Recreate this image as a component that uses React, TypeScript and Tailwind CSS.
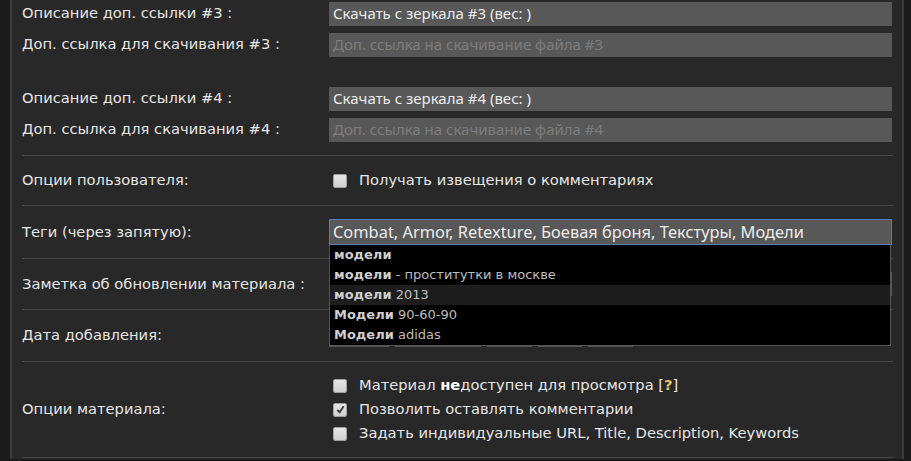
import React from 'react';

const labelFont = "font-['DejaVu_Sans','Liberation_Sans',sans-serif]";
const inputFont = "font-['Noto_Sans','Open_Sans',sans-serif]";

function Label({ children }: { children: React.ReactNode }) {
  return (
    <div className={`w-[307px] shrink-0 text-[14.7px] text-[#e6e6e6] ${labelFont}`}>{children}</div>
  );
}

function TextInput({ value, placeholder }: { value?: string; placeholder?: string }) {
  return (
    <div
      className={`flex h-[24px] w-[563px] items-center bg-[#585858] px-[4px] text-[15px] ${inputFont} ${
        value ? 'text-[#ececec]' : 'text-[#7c7c7c]'
      }`}
    >
      {value ?? placeholder}
    </div>
  );
}

function Checkbox({ checked }: { checked?: boolean }) {
  return (
    <div className="flex h-[14px] w-[14px] shrink-0 items-center justify-center rounded-[2px] border border-[#a0a0a0] bg-gradient-to-b from-[#e6e6e6] to-[#d0d0d0]">
      {checked && (
        <svg viewBox="0 0 12 12" className="h-[11px] w-[11px]">
          <path d="M2.5 6.5 L5 9 L9.5 2.5" fill="none" stroke="#3a3a3a" strokeWidth="2" />
        </svg>
      )}
    </div>
  );
}

function CheckRow({ checked, children }: { checked?: boolean; children: React.ReactNode }) {
  return (
    <div className={`flex h-[24px] items-center gap-[12px] pl-[4px] text-[14.7px] text-[#e6e6e6] ${labelFont}`}>
      <Checkbox checked={checked} />
      <span>{children}</span>
    </div>
  );
}

const suggestions: { b: string; rest: string; active?: boolean }[] = [
  { b: 'модели', rest: '' },
  { b: 'модели', rest: ' - проститутки в москве' },
  { b: 'модели', rest: ' 2013', active: true },
  { b: 'Модели', rest: ' 90-60-90' },
  { b: 'Модели', rest: ' adidas' },
];

export default function App() {
  return (
    <div className="h-[461px] overflow-hidden bg-[#1b1b1b] pl-[10px] pr-[7px]">
      <div className="h-full border-x-2 border-[#3b3b3b] bg-[#282828] pl-[10px] pr-[9px]">
        {/* mirrors */}
        <div className="-mt-[2px] pb-[10px]">
          <div className="flex h-[31px] items-center">
            <Label>Описание доп. ссылки #3 :</Label>
            <TextInput value="Скачать с зеркала #3 (вес: )" />
          </div>
          <div className="flex h-[31px] items-center">
            <Label>Доп. ссылка для скачивания #3 :</Label>
            <TextInput placeholder="Доп. ссылка на скачивание файла #3" />
          </div>
          <div className="h-[23px]" />
          <div className="flex h-[31px] items-center">
            <Label>Описание доп. ссылки #4 :</Label>
            <TextInput value="Скачать с зеркала #4 (вес: )" />
          </div>
          <div className="flex h-[31px] items-center">
            <Label>Доп. ссылка для скачивания #4 :</Label>
            <TextInput placeholder="Доп. ссылка на скачивание файла #4" />
          </div>
        </div>

        <div className="flex h-[50px] items-center border-t border-[#484848]">
          <Label>Опции пользователя:</Label>
          <CheckRow>Получать извещения о комментариях</CheckRow>
        </div>

        {/* tags */}
        <div className="flex h-[53px] items-center border-t border-[#484848]">
          <Label>Теги (через запятую):</Label>
          <div className="relative">
            <div className={`flex h-[26px] w-[563px] items-center border border-[#5a7cb4] bg-[#585858] px-[3px] text-[16.4px] text-[#ececec] ${inputFont}`}>
              Combat, Armor, Retexture, Боевая броня, Текстуры, Модели
            </div>
            <div className="absolute left-0 top-[26px] z-10 w-[562px] border-x border-b border-[#555] bg-black">
              {suggestions.map((s, i) => (
                <div
                  key={i}
                  className={`flex h-[20px] items-center pl-[4px] text-[13px] text-[#bdbdbd] ${labelFont} ${
                    s.active ? 'bg-[#1d1d1d]' : ''
                  }`}
                >
                  <b className="font-bold text-[#cfcfcf]">{s.b}</b>
                  <span className="whitespace-pre">{s.rest}</span>
                </div>
              ))}
            </div>
          </div>
        </div>

        <div className="flex h-[51px] items-center border-t border-[#484848]">
          <Label>Заметка об обновлении материала :</Label>
          <TextInput />
        </div>

        <div className="flex h-[52px] items-center border-t border-[#484848]">
          <Label>Дата добавления:</Label>
          <div className="flex gap-[6px]">
            <div className="h-[23px] w-[60px] bg-[#585858]" />
            <div className="h-[23px] w-[86px] bg-[#585858]" />
            <div className="h-[23px] w-[45px] bg-[#585858]" />
            <div className="h-[23px] w-[44px] bg-[#585858]" />
            <div className="h-[23px] w-[45px] bg-[#585858]" />
          </div>
        </div>

        <div className="flex h-[97px] items-center border-y border-[#484848]">
          <Label>Опции материала:</Label>
          <div>
            <CheckRow>
              Материал <b className="font-bold text-white">не</b>доступен для просмотра [
              <b className="font-bold text-[#e9c46a]">?</b>]
            </CheckRow>
            <CheckRow checked>Позволить оставлять комментарии</CheckRow>
            <CheckRow>Задать индивидуальные URL, Title, Description, Keywords</CheckRow>
          </div>
        </div>
      </div>
    </div>
  );
}
